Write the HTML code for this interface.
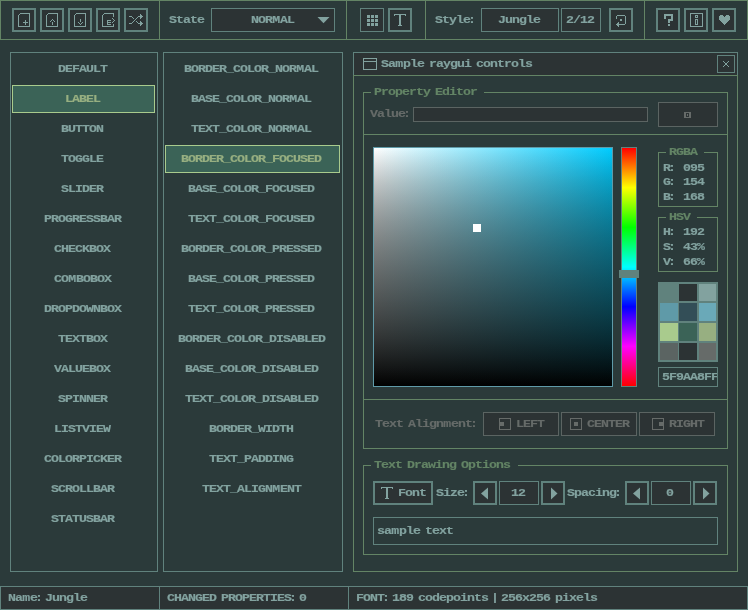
<!DOCTYPE html>
<html><head><meta charset="utf-8"><style>
html,body{margin:0;padding:0;}
body{width:748px;height:610px;overflow:hidden;background:#2b3a3a;position:relative;font-family:"Liberation Mono",monospace;}
.a{position:absolute;box-sizing:border-box;}
.t{position:absolute;white-space:pre;font-family:"Liberation Mono",monospace;font-weight:bold;font-size:11.5px;line-height:14px;letter-spacing:-0.813px;transform:scaleX(1.15);transform-origin:0 0;-webkit-text-stroke:0.15px currentColor;will-change:transform;}
svg.a{overflow:visible}
.sp{display:inline-block;width:4.348px;}
.cl{display:inline-block;width:2.609px;text-indent:-1.739px;}
.w8{display:inline-block;width:6.957px;text-indent:0.261px;}
</style></head><body>
<div class="a" style="left:0px;top:0px;width:748px;height:40px;border:1px solid #638465;"></div>
<div class="a" style="left:12px;top:8px;width:24px;height:24px;border:2px solid #60827d;background:#2c3334;"></div>
<svg class="a" style="left:16px;top:12px" width="16" height="16" viewBox="0 0 16 16" fill="#82a29f" shape-rendering="crispEdges"><rect x="4" y="1" width="10" height="1"/><rect x="3" y="2" width="1" height="1"/><rect x="13" y="2" width="1" height="1"/><rect x="2" y="3" width="1" height="1"/><rect x="13" y="3" width="1" height="1"/><rect x="2" y="4" width="1" height="1"/><rect x="13" y="4" width="1" height="1"/><rect x="2" y="5" width="1" height="1"/><rect x="13" y="5" width="1" height="1"/><rect x="2" y="6" width="1" height="1"/><rect x="13" y="6" width="1" height="1"/><rect x="2" y="7" width="1" height="1"/><rect x="13" y="7" width="1" height="1"/><rect x="2" y="8" width="1" height="1"/><rect x="9" y="8" width="1" height="1"/><rect x="13" y="8" width="1" height="1"/><rect x="2" y="9" width="1" height="1"/><rect x="9" y="9" width="1" height="1"/><rect x="13" y="9" width="1" height="1"/><rect x="2" y="10" width="1" height="1"/><rect x="7" y="10" width="5" height="1"/><rect x="13" y="10" width="1" height="1"/><rect x="2" y="11" width="1" height="1"/><rect x="9" y="11" width="1" height="1"/><rect x="13" y="11" width="1" height="1"/><rect x="2" y="12" width="1" height="1"/><rect x="9" y="12" width="1" height="1"/><rect x="13" y="12" width="1" height="1"/><rect x="2" y="13" width="1" height="1"/><rect x="13" y="13" width="1" height="1"/><rect x="2" y="14" width="12" height="1"/></svg>
<div class="a" style="left:40px;top:8px;width:24px;height:24px;border:2px solid #60827d;background:#2c3334;"></div>
<svg class="a" style="left:44px;top:12px" width="16" height="16" viewBox="0 0 16 16" fill="#82a29f" shape-rendering="crispEdges"><rect x="4" y="1" width="10" height="1"/><rect x="3" y="2" width="1" height="1"/><rect x="13" y="2" width="1" height="1"/><rect x="2" y="3" width="1" height="1"/><rect x="13" y="3" width="1" height="1"/><rect x="2" y="4" width="1" height="1"/><rect x="13" y="4" width="1" height="1"/><rect x="2" y="5" width="1" height="1"/><rect x="13" y="5" width="1" height="1"/><rect x="2" y="6" width="1" height="1"/><rect x="13" y="6" width="1" height="1"/><rect x="2" y="7" width="1" height="1"/><rect x="8" y="7" width="1" height="1"/><rect x="13" y="7" width="1" height="1"/><rect x="2" y="8" width="1" height="1"/><rect x="7" y="8" width="1" height="1"/><rect x="9" y="8" width="1" height="1"/><rect x="13" y="8" width="1" height="1"/><rect x="2" y="9" width="1" height="1"/><rect x="6" y="9" width="1" height="1"/><rect x="10" y="9" width="1" height="1"/><rect x="13" y="9" width="1" height="1"/><rect x="2" y="10" width="1" height="1"/><rect x="8" y="10" width="1" height="1"/><rect x="13" y="10" width="1" height="1"/><rect x="2" y="11" width="1" height="1"/><rect x="8" y="11" width="1" height="1"/><rect x="13" y="11" width="1" height="1"/><rect x="2" y="12" width="1" height="1"/><rect x="8" y="12" width="1" height="1"/><rect x="13" y="12" width="1" height="1"/><rect x="2" y="13" width="1" height="1"/><rect x="13" y="13" width="1" height="1"/><rect x="2" y="14" width="12" height="1"/></svg>
<div class="a" style="left:68px;top:8px;width:24px;height:24px;border:2px solid #60827d;background:#2c3334;"></div>
<svg class="a" style="left:72px;top:12px" width="16" height="16" viewBox="0 0 16 16" fill="#82a29f" shape-rendering="crispEdges"><rect x="4" y="1" width="10" height="1"/><rect x="3" y="2" width="1" height="1"/><rect x="13" y="2" width="1" height="1"/><rect x="2" y="3" width="1" height="1"/><rect x="13" y="3" width="1" height="1"/><rect x="2" y="4" width="1" height="1"/><rect x="13" y="4" width="1" height="1"/><rect x="2" y="5" width="1" height="1"/><rect x="13" y="5" width="1" height="1"/><rect x="2" y="6" width="1" height="1"/><rect x="13" y="6" width="1" height="1"/><rect x="2" y="7" width="1" height="1"/><rect x="8" y="7" width="1" height="1"/><rect x="13" y="7" width="1" height="1"/><rect x="2" y="8" width="1" height="1"/><rect x="8" y="8" width="1" height="1"/><rect x="13" y="8" width="1" height="1"/><rect x="2" y="9" width="1" height="1"/><rect x="8" y="9" width="1" height="1"/><rect x="13" y="9" width="1" height="1"/><rect x="2" y="10" width="1" height="1"/><rect x="6" y="10" width="1" height="1"/><rect x="10" y="10" width="1" height="1"/><rect x="13" y="10" width="1" height="1"/><rect x="2" y="11" width="1" height="1"/><rect x="7" y="11" width="1" height="1"/><rect x="9" y="11" width="1" height="1"/><rect x="13" y="11" width="1" height="1"/><rect x="2" y="12" width="1" height="1"/><rect x="8" y="12" width="1" height="1"/><rect x="13" y="12" width="1" height="1"/><rect x="2" y="13" width="1" height="1"/><rect x="13" y="13" width="1" height="1"/><rect x="2" y="14" width="12" height="1"/></svg>
<div class="a" style="left:96px;top:8px;width:24px;height:24px;border:2px solid #60827d;background:#2c3334;"></div>
<svg class="a" style="left:100px;top:12px" width="16" height="16" viewBox="0 0 16 16" fill="#82a29f" shape-rendering="crispEdges"><rect x="4" y="1" width="10" height="1"/><rect x="3" y="2" width="1" height="1"/><rect x="13" y="2" width="1" height="1"/><rect x="2" y="3" width="1" height="1"/><rect x="13" y="3" width="1" height="1"/><rect x="2" y="4" width="1" height="1"/><rect x="13" y="4" width="1" height="1"/><rect x="2" y="5" width="1" height="1"/><rect x="2" y="6" width="1" height="1"/><rect x="12" y="6" width="1" height="1"/><rect x="2" y="7" width="1" height="1"/><rect x="13" y="7" width="1" height="1"/><rect x="2" y="8" width="1" height="1"/><rect x="7" y="8" width="4" height="1"/><rect x="14" y="8" width="1" height="1"/><rect x="2" y="9" width="1" height="1"/><rect x="7" y="9" width="1" height="1"/><rect x="13" y="9" width="1" height="1"/><rect x="2" y="10" width="1" height="1"/><rect x="7" y="10" width="4" height="1"/><rect x="12" y="10" width="1" height="1"/><rect x="2" y="11" width="1" height="1"/><rect x="7" y="11" width="1" height="1"/><rect x="2" y="12" width="1" height="1"/><rect x="7" y="12" width="4" height="1"/><rect x="13" y="12" width="1" height="1"/><rect x="2" y="13" width="1" height="1"/><rect x="13" y="13" width="1" height="1"/><rect x="2" y="14" width="12" height="1"/></svg>
<div class="a" style="left:124px;top:8px;width:24px;height:24px;border:2px solid #60827d;background:#2c3334;"></div>
<svg class="a" style="left:128px;top:12px" width="16" height="16" viewBox="0 0 16 16" fill="#82a29f" shape-rendering="crispEdges"><rect x="12" y="2" width="1" height="1"/><rect x="12" y="3" width="2" height="1"/><rect x="1" y="4" width="3" height="1"/><rect x="10" y="4" width="5" height="1"/><rect x="4" y="5" width="1" height="1"/><rect x="9" y="5" width="1" height="1"/><rect x="12" y="5" width="2" height="1"/><rect x="5" y="6" width="1" height="1"/><rect x="8" y="6" width="1" height="1"/><rect x="12" y="6" width="1" height="1"/><rect x="7" y="7" width="1" height="1"/><rect x="6" y="8" width="1" height="1"/><rect x="5" y="9" width="1" height="1"/><rect x="8" y="9" width="1" height="1"/><rect x="12" y="9" width="1" height="1"/><rect x="4" y="10" width="1" height="1"/><rect x="9" y="10" width="1" height="1"/><rect x="12" y="10" width="2" height="1"/><rect x="1" y="11" width="3" height="1"/><rect x="10" y="11" width="5" height="1"/><rect x="12" y="12" width="2" height="1"/><rect x="12" y="13" width="1" height="1"/></svg>
<div class="a" style="left:159px;top:0px;width:1px;height:40px;background:#638465;"></div>
<div class="t" style="left:169px;top:13px;color:#82a29f;">State</div>
<div class="a" style="left:211px;top:8px;width:124px;height:24px;border:1px solid #60827d;background:#2c3334;"></div>
<div class="t" style="left:251px;top:13px;color:#82a29f;">NOR<span class="w8">M</span>AL</div>
<svg class="a" style="left:316px;top:16px" width="16" height="10" viewBox="0 0 16 10" fill="#82a29f"><polygon points="1.5,1 13.5,1 7.5,7.2"/></svg>
<div class="a" style="left:346px;top:0px;width:1px;height:40px;background:#638465;"></div>
<div class="a" style="left:360px;top:8px;width:24px;height:24px;border:1px solid #60827d;background:#2c3334;"></div>
<svg class="a" style="left:364px;top:12px" width="16" height="16" viewBox="0 0 16 16" fill="#82a29f" shape-rendering="crispEdges"><rect x="3" y="3" width="3" height="1"/><rect x="7" y="3" width="3" height="1"/><rect x="11" y="3" width="3" height="1"/><rect x="3" y="4" width="3" height="1"/><rect x="7" y="4" width="3" height="1"/><rect x="11" y="4" width="3" height="1"/><rect x="3" y="5" width="3" height="1"/><rect x="7" y="5" width="3" height="1"/><rect x="11" y="5" width="3" height="1"/><rect x="3" y="7" width="3" height="1"/><rect x="7" y="7" width="3" height="1"/><rect x="11" y="7" width="3" height="1"/><rect x="3" y="8" width="3" height="1"/><rect x="7" y="8" width="3" height="1"/><rect x="11" y="8" width="3" height="1"/><rect x="3" y="9" width="3" height="1"/><rect x="7" y="9" width="3" height="1"/><rect x="11" y="9" width="3" height="1"/><rect x="3" y="11" width="3" height="1"/><rect x="7" y="11" width="3" height="1"/><rect x="11" y="11" width="3" height="1"/><rect x="3" y="12" width="3" height="1"/><rect x="7" y="12" width="3" height="1"/><rect x="11" y="12" width="3" height="1"/><rect x="3" y="13" width="3" height="1"/><rect x="7" y="13" width="3" height="1"/><rect x="11" y="13" width="3" height="1"/></svg>
<div class="a" style="left:388px;top:8px;width:24px;height:24px;border:2px solid #60827d;background:#2c3334;"></div>
<svg class="a" style="left:392px;top:12px" width="16" height="16" viewBox="0 0 16 16" fill="#82a29f" shape-rendering="crispEdges"><rect x="2" y="2" width="12" height="1"/><rect x="2" y="3" width="1" height="1"/><rect x="7" y="3" width="2" height="1"/><rect x="13" y="3" width="1" height="1"/><rect x="7" y="4" width="2" height="1"/><rect x="7" y="5" width="2" height="1"/><rect x="7" y="6" width="2" height="1"/><rect x="7" y="7" width="2" height="1"/><rect x="7" y="8" width="2" height="1"/><rect x="7" y="9" width="2" height="1"/><rect x="7" y="10" width="2" height="1"/><rect x="7" y="11" width="2" height="1"/><rect x="7" y="12" width="2" height="1"/><rect x="6" y="13" width="4" height="1"/></svg>
<div class="a" style="left:425px;top:0px;width:1px;height:40px;background:#638465;"></div>
<div class="t" style="left:435px;top:13px;color:#82a29f;">Style<span class="cl">:</span></div>
<div class="a" style="left:481px;top:8px;width:78px;height:24px;border:1px solid #60827d;background:#2c3334;"></div>
<div class="t" style="left:498px;top:13px;color:#82a29f;">Jungle</div>
<div class="a" style="left:561px;top:8px;width:40px;height:24px;border:1px solid #60827d;background:#2c3334;"></div>
<div class="t" style="left:566px;top:13px;color:#82a29f;">2/12</div>
<div class="a" style="left:609px;top:8px;width:24px;height:24px;border:2px solid #60827d;background:#2c3334;"></div>
<svg class="a" style="left:613px;top:12px" width="16" height="16" viewBox="0 0 16 16" fill="#82a29f" shape-rendering="crispEdges"><rect x="4" y="3" width="8" height="1"/><rect x="3" y="4" width="1" height="1"/><rect x="12" y="4" width="1" height="1"/><rect x="3" y="5" width="1" height="1"/><rect x="12" y="5" width="1" height="1"/><rect x="3" y="6" width="1" height="1"/><rect x="12" y="6" width="1" height="1"/><rect x="7" y="7" width="2" height="1"/><rect x="12" y="7" width="1" height="1"/><rect x="7" y="8" width="2" height="1"/><rect x="12" y="8" width="1" height="1"/><rect x="12" y="9" width="1" height="1"/><rect x="5" y="10" width="1" height="1"/><rect x="12" y="10" width="1" height="1"/><rect x="4" y="11" width="2" height="1"/><rect x="12" y="11" width="1" height="1"/><rect x="3" y="12" width="9" height="1"/><rect x="4" y="13" width="2" height="1"/><rect x="5" y="14" width="1" height="1"/></svg>
<div class="a" style="left:644px;top:0px;width:1px;height:40px;background:#638465;"></div>
<div class="a" style="left:656px;top:8px;width:24px;height:24px;border:2px solid #60827d;background:#2c3334;"></div>
<svg class="a" style="left:660px;top:12px" width="16" height="16" viewBox="0 0 16 16" fill="#82a29f" shape-rendering="crispEdges"><rect x="4" y="2" width="9" height="1"/><rect x="4" y="3" width="9" height="1"/><rect x="4" y="4" width="2" height="1"/><rect x="11" y="4" width="2" height="1"/><rect x="4" y="5" width="2" height="1"/><rect x="11" y="5" width="2" height="1"/><rect x="4" y="6" width="2" height="1"/><rect x="11" y="6" width="2" height="1"/><rect x="8" y="7" width="5" height="1"/><rect x="8" y="8" width="5" height="1"/><rect x="8" y="9" width="2" height="1"/><rect x="8" y="10" width="2" height="1"/><rect x="8" y="12" width="2" height="1"/><rect x="8" y="13" width="2" height="1"/></svg>
<div class="a" style="left:684px;top:8px;width:24px;height:24px;border:2px solid #60827d;background:#2c3334;"></div>
<svg class="a" style="left:688px;top:12px" width="16" height="16" viewBox="0 0 16 16" fill="#82a29f" shape-rendering="crispEdges"><rect x="2" y="1" width="13" height="1"/><rect x="2" y="2" width="1" height="1"/><rect x="14" y="2" width="1" height="1"/><rect x="2" y="3" width="1" height="1"/><rect x="7" y="3" width="3" height="1"/><rect x="14" y="3" width="1" height="1"/><rect x="2" y="4" width="1" height="1"/><rect x="7" y="4" width="1" height="1"/><rect x="9" y="4" width="1" height="1"/><rect x="14" y="4" width="1" height="1"/><rect x="2" y="5" width="1" height="1"/><rect x="7" y="5" width="3" height="1"/><rect x="14" y="5" width="1" height="1"/><rect x="2" y="6" width="1" height="1"/><rect x="14" y="6" width="1" height="1"/><rect x="2" y="7" width="1" height="1"/><rect x="7" y="7" width="3" height="1"/><rect x="14" y="7" width="1" height="1"/><rect x="2" y="8" width="1" height="1"/><rect x="7" y="8" width="1" height="1"/><rect x="9" y="8" width="1" height="1"/><rect x="14" y="8" width="1" height="1"/><rect x="2" y="9" width="1" height="1"/><rect x="7" y="9" width="1" height="1"/><rect x="9" y="9" width="1" height="1"/><rect x="14" y="9" width="1" height="1"/><rect x="2" y="10" width="1" height="1"/><rect x="7" y="10" width="1" height="1"/><rect x="9" y="10" width="1" height="1"/><rect x="14" y="10" width="1" height="1"/><rect x="2" y="11" width="1" height="1"/><rect x="7" y="11" width="1" height="1"/><rect x="9" y="11" width="1" height="1"/><rect x="14" y="11" width="1" height="1"/><rect x="2" y="12" width="1" height="1"/><rect x="7" y="12" width="3" height="1"/><rect x="14" y="12" width="1" height="1"/><rect x="2" y="13" width="1" height="1"/><rect x="14" y="13" width="1" height="1"/><rect x="2" y="14" width="13" height="1"/></svg>
<div class="a" style="left:712px;top:8px;width:24px;height:24px;border:2px solid #60827d;background:#2c3334;"></div>
<svg class="a" style="left:716px;top:12px" width="16" height="16" viewBox="0 0 16 16" fill="#82a29f" shape-rendering="crispEdges"><rect x="4" y="3" width="3" height="1"/><rect x="10" y="3" width="3" height="1"/><rect x="3" y="4" width="5" height="1"/><rect x="9" y="4" width="5" height="1"/><rect x="3" y="5" width="11" height="1"/><rect x="3" y="6" width="11" height="1"/><rect x="3" y="7" width="11" height="1"/><rect x="4" y="8" width="9" height="1"/><rect x="5" y="9" width="7" height="1"/><rect x="6" y="10" width="5" height="1"/><rect x="7" y="11" width="3" height="1"/><rect x="8" y="12" width="1" height="1"/></svg>
<div class="a" style="left:10px;top:52px;width:148px;height:520px;border:1px solid #60827d;"></div>
<div class="t" style="left:58px;top:62px;color:#82a29f;">DEFAULT</div>
<div class="a" style="left:12px;top:85px;width:143px;height:28px;border:1px solid #a9cb8d;background:#3b6357;"></div>
<div class="t" style="left:65px;top:92px;color:#97af81;">LABEL</div>
<div class="t" style="left:61px;top:122px;color:#82a29f;">BUTTON</div>
<div class="t" style="left:61px;top:152px;color:#82a29f;">TOGGLE</div>
<div class="t" style="left:61px;top:182px;color:#82a29f;">SLIDER</div>
<div class="t" style="left:44px;top:212px;color:#82a29f;">PROGRESSBAR</div>
<div class="t" style="left:54px;top:242px;color:#82a29f;">CHECKBOX</div>
<div class="t" style="left:54px;top:272px;color:#82a29f;">CO<span class="w8">M</span>BOBOX</div>
<div class="t" style="left:44px;top:302px;color:#82a29f;">DROPDOWNBOX</div>
<div class="t" style="left:58px;top:332px;color:#82a29f;">TEXTBOX</div>
<div class="t" style="left:54px;top:362px;color:#82a29f;">VALUEBOX</div>
<div class="t" style="left:58px;top:392px;color:#82a29f;">SPINNER</div>
<div class="t" style="left:54px;top:422px;color:#82a29f;">LISTVIEW</div>
<div class="t" style="left:44px;top:452px;color:#82a29f;">COLORPICKER</div>
<div class="t" style="left:51px;top:482px;color:#82a29f;">SCROLLBAR</div>
<div class="t" style="left:51px;top:512px;color:#82a29f;">STATUSBAR</div>
<div class="a" style="left:163px;top:52px;width:180px;height:520px;border:1px solid #60827d;"></div>
<div class="t" style="left:184px;top:62px;color:#82a29f;">BORDER_COLOR_NOR<span class="w8">M</span>AL</div>
<div class="t" style="left:191px;top:92px;color:#82a29f;">BASE_COLOR_NOR<span class="w8">M</span>AL</div>
<div class="t" style="left:191px;top:122px;color:#82a29f;">TEXT_COLOR_NOR<span class="w8">M</span>AL</div>
<div class="a" style="left:165px;top:145px;width:175px;height:28px;border:1px solid #a9cb8d;background:#3b6357;"></div>
<div class="t" style="left:181px;top:152px;color:#97af81;">BORDER_COLOR_FOCUSED</div>
<div class="t" style="left:188px;top:182px;color:#82a29f;">BASE_COLOR_FOCUSED</div>
<div class="t" style="left:188px;top:212px;color:#82a29f;">TEXT_COLOR_FOCUSED</div>
<div class="t" style="left:181px;top:242px;color:#82a29f;">BORDER_COLOR_PRESSED</div>
<div class="t" style="left:188px;top:272px;color:#82a29f;">BASE_COLOR_PRESSED</div>
<div class="t" style="left:188px;top:302px;color:#82a29f;">TEXT_COLOR_PRESSED</div>
<div class="t" style="left:178px;top:332px;color:#82a29f;">BORDER_COLOR_DISABLED</div>
<div class="t" style="left:185px;top:362px;color:#82a29f;">BASE_COLOR_DISABLED</div>
<div class="t" style="left:185px;top:392px;color:#82a29f;">TEXT_COLOR_DISABLED</div>
<div class="t" style="left:209px;top:422px;color:#82a29f;">BORDER_WIDTH</div>
<div class="t" style="left:209px;top:452px;color:#82a29f;">TEXT_PADDING</div>
<div class="t" style="left:202px;top:482px;color:#82a29f;">TEXT_ALIGN<span class="w8">M</span>ENT</div>
<div class="a" style="left:353px;top:52px;width:385px;height:520px;border:1px solid #638465;background:#2b3a3a;"></div>
<div class="a" style="left:353px;top:52px;width:385px;height:24px;border:1px solid #60827d;background:#2c3334;"></div>
<div class="a" style="left:353px;top:75px;width:385px;height:1px;background:#638465;"></div>
<svg class="a" style="left:363px;top:58px" width="14" height="12" viewBox="0 0 14 12" fill="none" stroke="#82a29f" stroke-width="1" shape-rendering="crispEdges"><rect x="0.5" y="0.5" width="13" height="11"/><line x1="0" y1="3.5" x2="14" y2="3.5"/></svg>
<div class="t" style="left:381px;top:57px;color:#82a29f;">Sa<span class="w8">m</span>ple<span class="sp"></span>raygui<span class="sp"></span>controls</div>
<div class="a" style="left:717px;top:55px;width:18px;height:18px;border:1px solid #60827d;background:#2c3334;"></div>
<svg class="a" style="left:718px;top:56px" width="16" height="16" viewBox="0 0 16 16" fill="#82a29f" shape-rendering="crispEdges"><rect x="5" y="5" width="1" height="1"/><rect x="10" y="5" width="1" height="1"/><rect x="6" y="6" width="1" height="1"/><rect x="9" y="6" width="1" height="1"/><rect x="7" y="7" width="2" height="1"/><rect x="7" y="8" width="2" height="1"/><rect x="6" y="9" width="1" height="1"/><rect x="9" y="9" width="1" height="1"/><rect x="5" y="10" width="1" height="1"/><rect x="10" y="10" width="1" height="1"/></svg>
<div class="a" style="left:363px;top:92px;width:1px;height:357px;background:#638465;"></div>
<div class="a" style="left:727px;top:92px;width:1px;height:357px;background:#638465;"></div>
<div class="a" style="left:363px;top:448px;width:365px;height:1px;background:#638465;"></div>
<div class="a" style="left:363px;top:92px;width:8px;height:1px;background:#638465;"></div>
<div class="a" style="left:484px;top:92px;width:244px;height:1px;background:#638465;"></div>
<div class="t" style="left:374px;top:85px;color:#638465;">Property<span class="sp"></span>Editor</div>
<div class="t" style="left:370px;top:107px;color:#666b69;">Value<span class="cl">:</span></div>
<div class="a" style="left:413px;top:107px;width:235px;height:15px;border:1px solid #5b6462;background:#2c3334;"></div>
<div class="a" style="left:658px;top:102px;width:60px;height:25px;border:1px solid #5b6462;background:#2c3334;"></div>
<div class="a" style="left:684px;top:112px;width:7px;height:6px;background:#666b69;"></div>
<div class="a" style="left:686px;top:113px;width:3px;height:4px;background:#2c3334;"></div>
<div class="a" style="left:687px;top:114px;width:1px;height:2px;background:#666b69;"></div>
<div class="a" style="left:363px;top:134px;width:365px;height:1px;background:#638465;"></div>
<div class="a" style="left:373px;top:147px;width:240px;height:240px;border:1px solid #5f9aa8;background:linear-gradient(to bottom, rgba(43,58,58,0.0000) 0%, rgba(43,58,58,0.0475) 5%, rgba(43,58,58,0.0900) 10%, rgba(43,58,58,0.1275) 15%, rgba(43,58,58,0.1600) 20%, rgba(43,58,58,0.1875) 25%, rgba(43,58,58,0.2100) 30%, rgba(43,58,58,0.2275) 35%, rgba(43,58,58,0.2400) 40%, rgba(43,58,58,0.2475) 45%, rgba(43,58,58,0.2500) 50%, rgba(43,58,58,0.2475) 55%, rgba(43,58,58,0.2400) 60%, rgba(43,58,58,0.2275) 65%, rgba(43,58,58,0.2100) 70%, rgba(43,58,58,0.1875) 75%, rgba(43,58,58,0.1600) 80%, rgba(43,58,58,0.1275) 85%, rgba(43,58,58,0.0900) 90%, rgba(43,58,58,0.0475) 95%, rgba(43,58,58,0.0000) 100%), linear-gradient(to bottom, rgba(0,0,0,0), #000), linear-gradient(to right, #fff, #00ccff);"></div>
<div class="a" style="left:473px;top:224px;width:8px;height:8px;background:#ffffff;"></div>
<div class="a" style="left:621px;top:147px;width:16px;height:240px;box-sizing:border-box;border:1px solid #60827d;background:linear-gradient(to bottom,#f00 0%,#ff0 16.67%,#0f0 33.33%,#0ff 50%,#00f 66.67%,#f0f 83.33%,#f00 100%);"></div>
<div class="a" style="left:619px;top:270px;width:20px;height:8px;background:#60827d;"></div>
<div class="a" style="left:658px;top:152px;width:1px;height:55px;background:#638465;"></div>
<div class="a" style="left:717px;top:152px;width:1px;height:55px;background:#638465;"></div>
<div class="a" style="left:658px;top:206px;width:60px;height:1px;background:#638465;"></div>
<div class="a" style="left:658px;top:152px;width:8px;height:1px;background:#638465;"></div>
<div class="a" style="left:704px;top:152px;width:14px;height:1px;background:#638465;"></div>
<div class="t" style="left:669px;top:145px;color:#638465;">RGBA</div>
<div class="t" style="left:663px;top:161px;color:#82a29f;">R<span class="cl">:</span></div>
<div class="t" style="left:683px;top:161px;color:#82a29f;">095</div>
<div class="t" style="left:663px;top:175px;color:#82a29f;">G<span class="cl">:</span></div>
<div class="t" style="left:683px;top:175px;color:#82a29f;">154</div>
<div class="t" style="left:663px;top:190px;color:#82a29f;">B<span class="cl">:</span></div>
<div class="t" style="left:683px;top:190px;color:#82a29f;">168</div>
<div class="a" style="left:658px;top:217px;width:1px;height:55px;background:#638465;"></div>
<div class="a" style="left:717px;top:217px;width:1px;height:55px;background:#638465;"></div>
<div class="a" style="left:658px;top:271px;width:60px;height:1px;background:#638465;"></div>
<div class="a" style="left:658px;top:217px;width:8px;height:1px;background:#638465;"></div>
<div class="a" style="left:697px;top:217px;width:21px;height:1px;background:#638465;"></div>
<div class="t" style="left:669px;top:210px;color:#638465;">HSV</div>
<div class="t" style="left:663px;top:225px;color:#82a29f;">H<span class="cl">:</span></div>
<div class="t" style="left:683px;top:225px;color:#82a29f;">192</div>
<div class="t" style="left:663px;top:240px;color:#82a29f;">S<span class="cl">:</span></div>
<div class="t" style="left:683px;top:240px;color:#82a29f;">43%</div>
<div class="t" style="left:663px;top:255px;color:#82a29f;">V<span class="cl">:</span></div>
<div class="t" style="left:683px;top:255px;color:#82a29f;">66%</div>
<div class="a" style="left:658px;top:282px;width:60px;height:80px;background:#60827d;"></div>
<div class="a" style="left:660px;top:284px;width:18px;height:17px;background:#60827d;"></div>
<div class="a" style="left:679px;top:284px;width:18px;height:17px;background:#2c3334;"></div>
<div class="a" style="left:699px;top:284px;width:17px;height:17px;background:#82a29f;"></div>
<div class="a" style="left:660px;top:303px;width:18px;height:18px;background:#5f9aa8;"></div>
<div class="a" style="left:679px;top:303px;width:18px;height:18px;background:#334e57;"></div>
<div class="a" style="left:699px;top:303px;width:17px;height:18px;background:#6aa9b8;"></div>
<div class="a" style="left:660px;top:323px;width:18px;height:18px;background:#a9cb8d;"></div>
<div class="a" style="left:679px;top:323px;width:18px;height:18px;background:#3b6357;"></div>
<div class="a" style="left:699px;top:323px;width:17px;height:18px;background:#97af81;"></div>
<div class="a" style="left:660px;top:343px;width:18px;height:17px;background:#5b6462;"></div>
<div class="a" style="left:679px;top:343px;width:18px;height:17px;background:#2c3334;"></div>
<div class="a" style="left:699px;top:343px;width:17px;height:17px;background:#666b69;"></div>
<div class="a" style="left:658px;top:367px;width:60px;height:20px;border:1px solid #60827d;"></div>
<div class="a" style="left:659px;top:368px;width:58px;height:18px;overflow:hidden">
<div class="t" style="left:3px;top:2px;color:#82a29f;">5F9AA8FF</div>
</div>
<div class="a" style="left:363px;top:399px;width:365px;height:1px;background:#638465;"></div>
<div class="t" style="left:375px;top:417px;color:#666b69;">Text<span class="sp"></span>Align<span class="w8">m</span>ent<span class="cl">:</span></div>
<div class="a" style="left:483px;top:412px;width:76px;height:24px;border:1px solid #5b6462;background:#2c3334;"></div>
<div class="a" style="left:561px;top:412px;width:76px;height:24px;border:1px solid #5b6462;background:#2c3334;"></div>
<div class="a" style="left:639px;top:412px;width:76px;height:24px;border:1px solid #5b6462;background:#2c3334;"></div>
<div class="a" style="left:499px;top:418px;width:12px;height:12px;border:1px solid #666b69;"></div>
<div class="a" style="left:500px;top:422px;width:4px;height:4px;background:#666b69;"></div>
<div class="t" style="left:516px;top:417px;color:#666b69;">LEFT</div>
<div class="a" style="left:570px;top:418px;width:12px;height:12px;border:1px solid #666b69;"></div>
<div class="a" style="left:574px;top:422px;width:4px;height:4px;background:#666b69;"></div>
<div class="t" style="left:587px;top:417px;color:#666b69;">CENTER</div>
<div class="a" style="left:652px;top:418px;width:12px;height:12px;border:1px solid #666b69;"></div>
<div class="a" style="left:659px;top:422px;width:4px;height:4px;background:#666b69;"></div>
<div class="t" style="left:669px;top:417px;color:#666b69;">RIGHT</div>
<div class="a" style="left:363px;top:465px;width:1px;height:90px;background:#638465;"></div>
<div class="a" style="left:727px;top:465px;width:1px;height:90px;background:#638465;"></div>
<div class="a" style="left:363px;top:554px;width:365px;height:1px;background:#638465;"></div>
<div class="a" style="left:363px;top:465px;width:8px;height:1px;background:#638465;"></div>
<div class="a" style="left:518px;top:465px;width:210px;height:1px;background:#638465;"></div>
<div class="t" style="left:374px;top:458px;color:#638465;">Text<span class="sp"></span>Drawing<span class="sp"></span>Options</div>
<div class="a" style="left:373px;top:481px;width:60px;height:24px;border:2px solid #60827d;background:#2c3334;"></div>
<svg class="a" style="left:379px;top:485px" width="16" height="16" viewBox="0 0 16 16" fill="#82a29f" shape-rendering="crispEdges"><rect x="2" y="2" width="12" height="1"/><rect x="2" y="3" width="1" height="1"/><rect x="7" y="3" width="2" height="1"/><rect x="13" y="3" width="1" height="1"/><rect x="7" y="4" width="2" height="1"/><rect x="7" y="5" width="2" height="1"/><rect x="7" y="6" width="2" height="1"/><rect x="7" y="7" width="2" height="1"/><rect x="7" y="8" width="2" height="1"/><rect x="7" y="9" width="2" height="1"/><rect x="7" y="10" width="2" height="1"/><rect x="7" y="11" width="2" height="1"/><rect x="7" y="12" width="2" height="1"/><rect x="6" y="13" width="4" height="1"/></svg>
<div class="t" style="left:398px;top:486px;color:#82a29f;">Font</div>
<div class="t" style="left:436px;top:486px;color:#82a29f;">Size<span class="cl">:</span></div>
<div class="a" style="left:473px;top:481px;width:24px;height:24px;border:2px solid #60827d;background:#2c3334;"></div>
<svg class="a" style="left:473px;top:481px" width="24" height="24" fill="#82a29f"><polygon points="8,12.5 15,6.5 15,18.5"/></svg>
<div class="a" style="left:499px;top:481px;width:40px;height:24px;border:1px solid #60827d;background:#2c3334;"></div>
<div class="t" style="left:511px;top:486px;color:#82a29f;">12</div>
<div class="a" style="left:541px;top:481px;width:24px;height:24px;border:2px solid #60827d;background:#2c3334;"></div>
<svg class="a" style="left:541px;top:481px" width="24" height="24" fill="#82a29f"><polygon points="10,6.5 10,18.5 16.5,12.5"/></svg>
<div class="t" style="left:567px;top:486px;color:#82a29f;">Spacing<span class="cl">:</span></div>
<div class="a" style="left:625px;top:481px;width:24px;height:24px;border:2px solid #60827d;background:#2c3334;"></div>
<svg class="a" style="left:625px;top:481px" width="24" height="24" fill="#82a29f"><polygon points="8,12.5 15,6.5 15,18.5"/></svg>
<div class="a" style="left:651px;top:481px;width:40px;height:24px;border:1px solid #60827d;background:#2c3334;"></div>
<div class="t" style="left:666px;top:486px;color:#82a29f;">0</div>
<div class="a" style="left:693px;top:481px;width:24px;height:24px;border:2px solid #60827d;background:#2c3334;"></div>
<svg class="a" style="left:693px;top:481px" width="24" height="24" fill="#82a29f"><polygon points="10,6.5 10,18.5 16.5,12.5"/></svg>
<div class="a" style="left:373px;top:517px;width:345px;height:28px;border:1px solid #60827d;"></div>
<div class="t" style="left:377px;top:524px;color:#82a29f;">sa<span class="w8">m</span>ple<span class="sp"></span>text</div>
<div class="a" style="left:0px;top:586px;width:160px;height:24px;border:1px solid #60827d;background:#2c3334;"></div>
<div class="t" style="left:8px;top:591px;color:#82a29f;">Na<span class="w8">m</span>e<span class="cl">:</span><span class="sp"></span>Jungle</div>
<div class="a" style="left:159px;top:586px;width:190px;height:24px;border:1px solid #60827d;background:#2c3334;"></div>
<div class="t" style="left:167px;top:591px;color:#82a29f;">CHANGED<span class="sp"></span>PROPERTIES<span class="cl">:</span><span class="sp"></span>0</div>
<div class="a" style="left:348px;top:586px;width:400px;height:24px;border:1px solid #60827d;background:#2c3334;"></div>
<div class="t" style="left:356px;top:591px;color:#82a29f;">FONT<span class="cl">:</span><span class="sp"></span>189<span class="sp"></span>codepoints<span class="sp"></span><span class="cl">|</span><span class="sp"></span>256x256<span class="sp"></span>pixels</div>
</body></html>
